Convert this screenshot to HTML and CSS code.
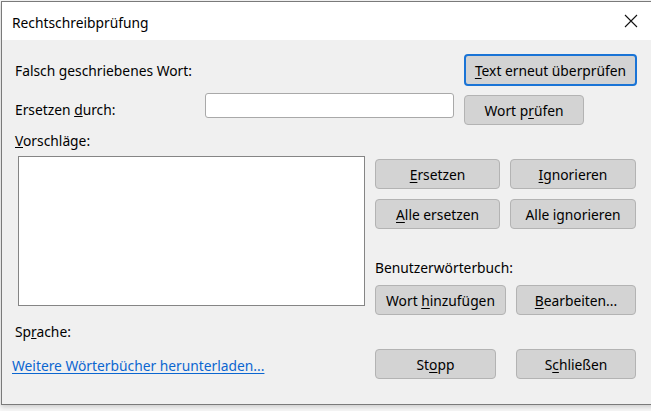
FILE: index.html
```html
<!DOCTYPE html>
<html lang="de">
<head>
<meta charset="utf-8">
<title>Rechtschreibprüfung</title>
<link rel="stylesheet" href="styles.css">
</head>
<body>
<div class="window">
  <div class="titlebar">
    <span class="title">Rechtschreibprüfung</span>
    <span class="close" aria-label="Schließen">
      <svg width="14" height="14" viewBox="0 0 14 14"><path d="M1 1 L13 13 M13 1 L1 13" stroke="#111" stroke-width="1.1" fill="none"/></svg>
    </span>
  </div>
  <div class="content">
    <div class="row row-word">
      <span class="label label-wide">Falsch geschriebenes Wort:</span>
      <button class="btn btn-default btn-recheck"><u>T</u>ext erneut überprüfen</button>
    </div>
    <div class="row row-replace">
      <label class="label label-replace">Ersetzen <u>d</u>urch:</label>
      <input class="field" type="text">
      <button class="btn btn-check">Wort p<u>r</u>üfen</button>
    </div>
    <div class="main">
      <div class="col-left">
        <div class="label label-suggest"><u>V</u>orschläge:</div>
        <div class="listbox"></div>
        <div class="label label-lang">Sp<u>r</u>ache:</div>
        <a class="link" href="#">Weitere Wörterbücher herunterladen...</a>
      </div>
      <div class="col-right">
        <div class="btn-grid">
          <button class="btn"><u>E</u>rsetzen</button>
          <button class="btn"><u>I</u>gnorieren</button>
          <button class="btn"><u>A</u>lle ersetzen</button>
          <button class="btn">Alle ignorieren</button>
        </div>
        <div class="label label-dict">Benutzerwörterbuch:</div>
        <div class="btn-row btn-row-dict">
          <button class="btn btn-add">Wort <u>h</u>inzufügen</button>
          <button class="btn btn-edit"><u>B</u>earbeiten...</button>
        </div>
        <div class="btn-row btn-row-end">
          <button class="btn btn-stop">St<u>o</u>pp</button>
          <button class="btn btn-close">S<u>c</u>hließen</button>
        </div>
      </div>
    </div>
  </div>
</div>
</body>
</html>
```

FILE: styles.css
```css
html, body {
  margin: 0;
  padding: 0;
  height: 100%;
  overflow: hidden;
  background: #f7f7f7;
}

body {
  font-family: "Noto Sans", "DejaVu Sans", sans-serif;
  font-size: 13.8px;
  color: #000;
}

.window {
  margin: 1px 0 0 1px;
  width: 655px;
  height: 404px;
  box-sizing: border-box;
  border: 1px solid #7a7a7a;
  background: #f0f0f0;
  box-shadow: 0 2px 5px rgba(0, 0, 0, 0.18);
  display: flex;
  flex-direction: column;
}

.titlebar {
  height: 38px;
  flex: none;
  background: #fff;
  display: flex;
  align-items: center;
  padding-left: 10px;
}

.title {
  flex: 1;
  line-height: 20px;
  padding-top: 4px;
}

.close {
  width: 46px;
  height: 38px;
  display: flex;
  align-items: center;
  justify-content: center;
  margin-right: 1px;
}

.close svg {
  display: block;
}

.content {
  flex: 1;
  padding: 0 18px 0 13px;
}

.label {
  line-height: 20px;
  white-space: nowrap;
}

.row {
  display: flex;
}

.row-word {
  margin-top: 14px;
  align-items: center;
}

.label-wide {
  flex: 1;
  padding-top: 1px;
}

.row-replace {
  margin-top: 7px;
  align-items: flex-start;
}

.label-replace {
  width: 190px;
  margin-top: 7px;
}

.field {
  width: 249px;
  height: 25px;
  box-sizing: border-box;
  margin: 0;
  border: 1px solid #a9a9a9;
  border-radius: 3px;
  background: #fff;
  padding: 0 4px;
  font: inherit;
}

.btn {
  font: inherit;
  color: #000;
  background: #d3d3d3;
  border: 1px solid #b3b3b3;
  border-radius: 4px;
  height: 30px;
  box-sizing: border-box;
  padding: 0 6px;
  margin: 0;
  white-space: nowrap;
  cursor: default;
}

.btn u {
  text-underline-offset: 2px;
}

.btn-default {
  border: 2px solid #1a74d6;
}

.btn-recheck {
  width: 173px;
  height: 32px;
}

.btn-check {
  width: 120px;
  margin: 2px 0 0 10px;
}

.main {
  display: flex;
}

.col-left {
  width: 360px;
  display: flex;
  flex-direction: column;
  align-items: flex-start;
}

.label-suggest {
  margin-top: 6px;
}

.listbox {
  margin: 5px 0 0 3px;
  width: 347px;
  height: 150px;
  box-sizing: border-box;
  border: 1px solid #858585;
  background: #fff;
}

.label-lang {
  margin-top: 16px;
}

.link {
  margin: 14px 0 0 -3px;
  line-height: 20px;
  color: #0b66d0;
  text-decoration: underline;
  text-underline-offset: 2px;
}

.col-right {
  width: 261px;
  padding-top: 34px;
}

.btn-grid {
  display: grid;
  grid-template-columns: 125px 126px;
  column-gap: 10px;
  row-gap: 10px;
}

.label-dict {
  margin-top: 29px;
}

.btn-row {
  display: flex;
  justify-content: space-between;
}

.btn-row-dict {
  margin-top: 7px;
}

.btn-add {
  width: 131px;
}

.btn-edit {
  width: 120px;
}

.btn-row-end {
  margin-top: 34px;
}

.btn-stop {
  width: 121px;
}

.btn-close {
  width: 120px;
}
```
